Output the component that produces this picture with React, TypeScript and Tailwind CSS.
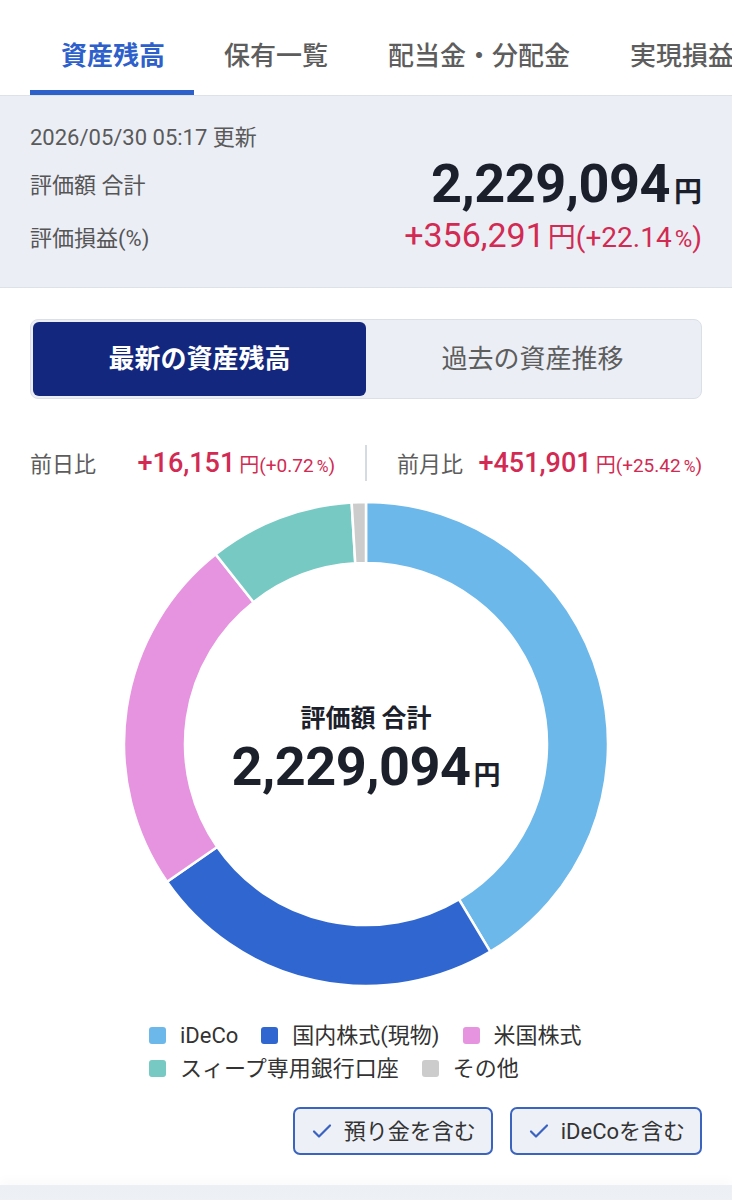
import React from "react";

type Slice = { label: string; color: string; from: number; to: number };

const slices: Slice[] = [
  { label: "iDeCo", color: "#6db8ea", from: 0, to: 149.1 },
  { label: "国内株式(現物)", color: "#3066d0", from: 149.1, to: 235.3 },
  { label: "米国株式", color: "#e694df", from: 235.3, to: 321.6 },
  { label: "スィープ専用銀行口座", color: "#77c9c4", from: 321.6, to: 356.6 },
  { label: "その他", color: "#cccccc", from: 356.6, to: 360 },
];

function arcPath(cx: number, cy: number, r0: number, r1: number, a0: number, a1: number) {
  const pt = (r: number, a: number) => {
    const rad = ((a - 90) * Math.PI) / 180;
    return [cx + r * Math.cos(rad), cy + r * Math.sin(rad)];
  };
  const large = a1 - a0 > 180 ? 1 : 0;
  const [x1, y1] = pt(r1, a0);
  const [x2, y2] = pt(r1, a1);
  const [x3, y3] = pt(r0, a1);
  const [x4, y4] = pt(r0, a0);
  return `M${x1} ${y1} A${r1} ${r1} 0 ${large} 1 ${x2} ${y2} L${x3} ${y3} A${r0} ${r0} 0 ${large} 0 ${x4} ${y4} Z`;
}

function Donut() {
  const size = 486;
  const c = size / 2;
  return (
    <div className="relative mx-auto h-[486px] w-[486px]">
      <svg width={size} height={size} viewBox={`0 0 ${size} ${size}`}>
        {slices.map((s) => (
          <path
            key={s.label}
            d={arcPath(c, c, 181, 242, s.from, s.to)}
            fill={s.color}
            stroke="#ffffff"
            strokeWidth={2.5}
            strokeLinejoin="miter"
          />
        ))}
      </svg>
      <div className="absolute inset-0 flex flex-col items-center justify-center pt-[20px]">
        <div className="text-[25px] font-bold leading-[32px] text-[#1b202a]">評価額 合計</div>
        <div className="mt-[2px] flex items-baseline leading-[60px] text-[#1b202a]">
          <span className="text-[54px] font-bold tracking-[-0.5px]">2,229,094</span>
          <span className="ml-[3px] text-[27px] font-bold">円</span>
        </div>
      </div>
    </div>
  );
}

function Tabs() {
  const tabs = ["資産残高", "保有一覧", "配当金・分配金", "実現損益"];
  return (
    <div className="flex h-[95px] overflow-hidden whitespace-nowrap bg-white pl-[30px]">
      {tabs.map((t, i) => (
        <div
          key={t}
          className={
            i === 0
              ? "flex h-[95px] shrink-0 items-center border-b-[5px] border-[#2e60cc] pl-[31px] pr-[29px] pt-[22px] text-[26px] font-bold text-[#2e60cc]"
              : "flex h-[95px] shrink-0 items-center border-b-[5px] border-transparent px-[30px] pt-[22px] text-[26px] font-medium text-[#5d5d5d]"
          }
        >
          {t}
        </div>
      ))}
    </div>
  );
}

function Summary() {
  return (
    <div className="border-y border-[#dde1e8] bg-[#ebeef5] px-[30px] pb-[31px] pt-[28px]">
      <div className="h-[28px] text-[22px] leading-[28px] text-[#5a5a5a]">2026/05/30 05:17 更新</div>
      <div className="mt-[5px] flex h-[56px] items-center justify-between">
        <span className="text-[22px] text-[#555]">評価額 合計</span>
        <span className="flex items-baseline text-[#1a1f2b]">
          <span className="text-[54px] font-bold leading-[56px] tracking-[-0.5px]">2,229,094</span>
          <span className="ml-[4px] text-[28px] font-bold">円</span>
        </span>
      </div>
      <div className="mt-[7px] flex h-[36px] items-center justify-between">
        <span className="text-[22px] text-[#555]">評価損益(%)</span>
        <span className="flex items-baseline text-[#d22a52]">
          <span className="text-[34px] leading-[36px]">+356,291</span>
          <span className="ml-[3px] text-[28px]">円</span>
          <span className="text-[28px]">(+22.14</span>
          <span className="ml-[3px] text-[24px]">%</span>
          <span className="text-[28px]">)</span>
        </span>
      </div>
    </div>
  );
}

function Segment() {
  return (
    <div className="mx-[30px] mt-[31px] grid h-[80px] grid-cols-2 rounded-[8px] border border-[#dbe0e8] bg-[#ebeef5] p-[2px]">
      <div className="flex items-center justify-center rounded-[6px] bg-[#13277e] text-[26px] font-bold text-white">
        最新の資産残高
      </div>
      <div className="flex items-center justify-center text-[26px] text-[#5d5d5d]">過去の資産推移</div>
    </div>
  );
}

function Change({ label, value, pct }: { label: string; value: string; pct: string }) {
  return (
    <div className="flex w-[305px] items-baseline justify-between">
      <span className="text-[22px] text-[#5d5d5d]">{label}</span>
      <span className="flex items-baseline text-[#d22a52]">
        <span className="text-[27px] font-medium">{value}</span>
        <span className="ml-[4px] text-[20px]">円</span>
        <span className="text-[19px]">(+{pct}</span>
        <span className="ml-[3px] text-[16px]">%</span>
        <span className="text-[19px]">)</span>
      </span>
    </div>
  );
}

function Changes() {
  return (
    <div className="mt-[46px] flex h-[36px] items-center justify-between px-[30px]">
      <Change label="前日比" value="+16,151" pct="0.72" />
      <div className="h-[36px] w-[2px] bg-[#d5dbe3]" />
      <Change label="前月比" value="+451,901" pct="25.42" />
    </div>
  );
}

function LegendItem({ s }: { s: Slice }) {
  return (
    <div className="flex items-center">
      <span className="mr-[14px] h-[17px] w-[17px] rounded-[3px]" style={{ backgroundColor: s.color }} />
      <span className="text-[22px] leading-[33px] text-[#333]">{s.label}</span>
    </div>
  );
}

function Legend() {
  return (
    <div className="mx-auto mt-[32px] flex w-[434px] flex-col">
      <div className="flex gap-[23px]">
        {slices.slice(0, 3).map((s) => (
          <LegendItem key={s.label} s={s} />
        ))}
      </div>
      <div className="flex gap-[23px]">
        {slices.slice(3).map((s) => (
          <LegendItem key={s.label} s={s} />
        ))}
      </div>
    </div>
  );
}

function CheckButton({ label }: { label: string }) {
  return (
    <div className="flex h-[48px] items-center gap-[10px] rounded-[7px] border-2 border-[#3b64bf] bg-[#edf0f6] pl-[15px] pr-[15px]">
      <svg width="24" height="24" viewBox="0 0 24 24" fill="none" stroke="#3a62c0" strokeWidth="2.2" strokeLinecap="round" strokeLinejoin="round">
        <path d="M4 12.5l5 5L20 6.5" />
      </svg>
      <span className="text-[22px] text-[#333]">{label}</span>
    </div>
  );
}

export default function App() {
  return (
    <div className="h-[1200px] w-[732px] overflow-hidden bg-white font-['Roboto','Noto_Sans_CJK_JP',sans-serif]">
      <Tabs />
      <Summary />
      <Segment />
      <Changes />
      <div className="mt-[20px]">
        <Donut />
      </div>
      <Legend />
      <div className="mt-[22px] flex justify-end gap-[17px] px-[30px]">
        <CheckButton label="預り金を含む" />
        <CheckButton label="iDeCoを含む" />
      </div>
      <div className="mt-[30px] h-[30px] bg-gradient-to-b from-[#eceff4] to-[#eef1f5] shadow-[0_-6px_10px_rgba(0,0,0,0.02)]" />
    </div>
  );
}
